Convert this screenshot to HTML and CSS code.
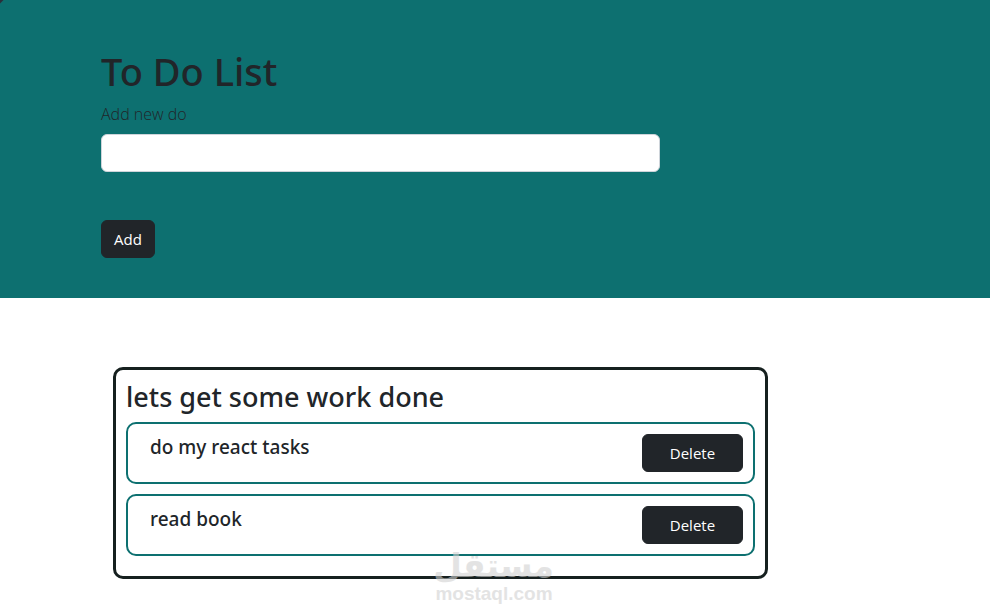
FILE: index.html
```html
<!DOCTYPE html>
<html lang="en">
<head>
  <meta charset="UTF-8">
  <meta name="viewport" content="width=device-width, initial-scale=1">
  <title>To Do List</title>
  <link rel="stylesheet" href="styles.css">
</head>
<body>
  <header class="header">
    <h1>To Do List</h1>
    <form class="add-form">
      <label for="todo">Add new do</label>
      <input class="input" type="text" id="todo" name="todo">
      <button class="button" type="submit">Add</button>
    </form>
  </header>
  <main class="main">
    <section class="list">
      <h2>lets get some work done</h2>
      <div class="item">
        <h3>do my react tasks</h3>
        <button class="button" type="button">Delete</button>
      </div>
      <div class="item">
        <h3>read book</h3>
        <button class="button" type="button">Delete</button>
      </div>
    </section>
  </main>
  <div class="watermark">
    <span class="watermark-ar" lang="ar" dir="rtl">مستقل</span>
    <span class="watermark-en">mostaql.com</span>
  </div>
</body>
</html>
```

FILE: styles.css
```css
*{box-sizing: border-box;}
body{
  margin: 0;
  font-family: 'Segoe UI', 'Open Sans', 'Noto Sans', sans-serif;
  font-size: 16px;
  line-height: 24px;
  background: #fff;
  color: #212529;
}
h1,h2,h3{
  margin: 0;
  font-family: 'Segoe UI', 'Noto Sans', sans-serif;
  font-weight: 500;
}
h1{
  margin-bottom: 6px;
  font-size: 38px;
  line-height: 50px;
}
h2{
  margin-bottom: 8px;
  font-size: 27px;
  line-height: 34px;
}
h3{
  padding: 0 12px;
  font-size: 19px;
  line-height: 26px;
}
label{font-weight: 300;}
.header{
  padding: 46px 101px 40px;
  background: linear-gradient(135deg, #2b2f3a 2px, #0d7070 3px);
}
.add-form{
  display: flex;
  flex-direction: column;
  align-items: flex-start;
}
.input{
  width: 71%;
  height: 38px;
  margin: 8px 0 48px;
  padding: 6px 12px;
  font: inherit;
  border: 1px solid #ced4da;
  border-radius: 6px;
}
.button{
  height: 38px;
  padding: 6px 12px;
  font: inherit;
  font-size: 15px;
  color: #fff;
  background: #212529;
  border: 1px solid #212529;
  border-radius: 6px;
}
.main{padding: 69px 100px 36px 101px;}
.list{
  width: 83%;
  margin-left: 12px;
  padding: 10px;
  border: 3px solid #16201f;
  border-radius: 10px;
}
.item{
  display: grid;
  grid-template-columns: 5fr 1fr;
  align-items: start;
  margin-bottom: 10px;
  padding: 10px;
  border: 2px solid #0d7070;
  border-radius: 10px;
}
.watermark{
  position: absolute;
  top: 549px;
  left: 50%;
  width: 120px;
  margin-left: -61px;
  text-align: center;
  font-weight: bold;
  color: #d2d2d2;
  opacity: .6;
}
.watermark span{
  display: block;
  white-space: nowrap;
}
.watermark-ar{
  font-family: 'DejaVu Sans', sans-serif;
  font-size: 33px;
  line-height: 34px;
}
.watermark-en{
  font-family: 'Liberation Sans', Arial, sans-serif;
  font-size: 19px;
  line-height: 22px;
}
```
